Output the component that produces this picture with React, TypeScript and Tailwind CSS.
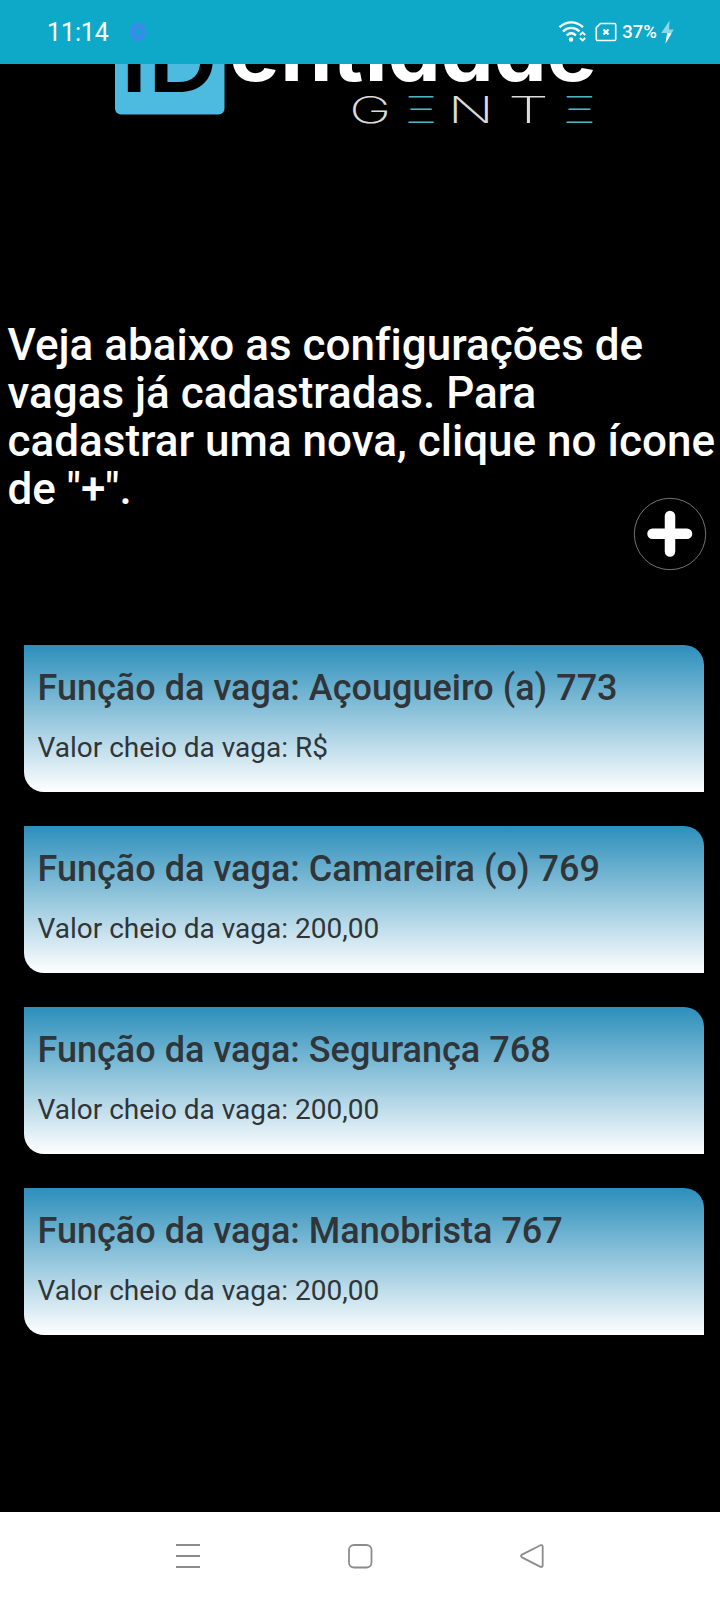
type Job = {
  id: number;
  role: string;
  amount: string;
};

const jobs: Job[] = [
  { id: 773, role: "Açougueiro (a)", amount: "R$" },
  { id: 769, role: "Camareira (o)", amount: "200,00" },
  { id: 768, role: "Segurança", amount: "200,00" },
  { id: 767, role: "Manobrista", amount: "200,00" },
];

function WifiIcon() {
  return (
    <svg width="28" height="22" viewBox="0 0 28 22" fill="none" stroke="#fff" strokeWidth="2.3">
      <path d="M1.5 6.2C8.5-.3 18-.3 25 6.2" />
      <path d="M5 10.4c5-4.6 11.5-4.6 16.5 0" />
      <path d="M8.6 14.3c3-2.5 6.5-2.5 9.3 0" />
      <circle cx="13" cy="18.5" r="2.2" fill="#fff" stroke="none" />
      <path d="M22 14l2.6-2.5 2.6 2.5M22 17l2.6 2.5 2.6-2.5" strokeWidth="1.8" />
    </svg>
  );
}

function SimIcon() {
  return (
    <svg width="22" height="20" viewBox="0 0 22 20" fill="none" stroke="#fff">
      <path
        d="M5.5 1.5h14a1.2 1.2 0 0 1 1.2 1.2v14.6a1.2 1.2 0 0 1-1.2 1.2h-17a1.2 1.2 0 0 1-1.2-1.2V5.7z"
        strokeWidth="1.6"
      />
      <path d="M8.5 7.5l5 5M13.5 7.5l-5 5" strokeWidth="2.2" />
    </svg>
  );
}

function BoltIcon() {
  return (
    <svg width="13" height="24" viewBox="0 0 13 24">
      <path d="M8.5.5L.3 13h5.9L4.5 23.5 12.8 9.5H8z" fill="#8fd6e6" />
      <path d="M4.5 23.5L10.4 13.5 6.2 13z" fill="#fff" />
    </svg>
  );
}

function StatusBar() {
  return (
    <header className="flex h-16 shrink-0 items-center justify-between bg-[#0ea9c8] pr-[46px] pl-[47px] text-white">
      <div className="flex items-center gap-[19px]">
        <span className="pt-px text-[25px] tracking-[-0.1px]">11:14</span>
        <svg width="20" height="22" viewBox="0 0 20 22">
          <path
            d="M10 .5l2.8 3.7 4.6-.6-1.8 4.2L19 11l-3.400 3.200 1.800 4.200-4.600-.6L10 21.500l-2.800-3.700-4.600.6 1.800-4.200L1 11l3.400-3.200-1.800-4.200 4.600.6z"
            fill="#3f87ef"
          />
          <circle cx="10" cy="11" r="3.3" fill="#0ea9c8" />
        </svg>
      </div>
      <div className="flex items-center">
        <WifiIcon />
        <span className="ml-[9px]">
          <SimIcon />
        </span>
        <span className="ml-[5px] pt-[2px] text-[18.5px] font-medium">37%</span>
        <span className="ml-1">
          <BoltIcon />
        </span>
      </div>
    </header>
  );
}

function Logo() {
  return (
    <svg className="block" width="720" height="76" viewBox="0 64 720 76" fontFamily="Inter, sans-serif">
      <rect x="115" y="5" width="109.5" height="109.5" rx="6" fill="#4dbbdf" />
      <text
        x="0 24.6"
        y="0"
        fontSize="88"
        fontWeight="620"
        fill="#000"
        transform="translate(120.8 91.5) scale(1.1 1)"
      >
        ID
      </text>
      <text
        x="218.6 267 316.7 347.4 369.3 419.7 470.2 520.8"
        y="81.3"
        fontSize="80"
        fontWeight="650"
        fill="#fff"
        transform="scale(1.05 1)"
        style={{ fontFeatureSettings: '"cv11"' }}
      >
        entidade
      </text>
      <g fontSize="36.5" fontWeight="200" fill="#dcdcdc">
        <text transform="translate(349.2 123) scale(1.55 1)">G</text>
        <text transform="translate(405 123) scale(1.35 1)" fill="#4fb6bf">Ξ</text>
        <text transform="translate(447.6 123) scale(1.67 1)">N</text>
        <text transform="translate(507.9 123) scale(1.79 1)">T</text>
        <text transform="translate(563 123) scale(1.38 1)" fill="#4fb6bf">Ξ</text>
      </g>
    </svg>
  );
}

function AddButton() {
  return (
    <button type="button" aria-label="Adicionar" className="block">
      <svg width="74" height="74" viewBox="0 0 74 74">
        <circle cx="37" cy="37" r="35.7" fill="none" stroke="#8f8f8f" strokeWidth="0.8" />
        <path d="M37 19v35.5M19.5 36.8H54" stroke="#fff" strokeWidth="10.5" strokeLinecap="round" />
      </svg>
    </button>
  );
}

function JobCard({ job }: { job: Job }) {
  return (
    <article className="h-[147px] rounded-tr-[20px] rounded-bl-[20px] bg-[linear-gradient(to_bottom,#2c8fbb,#fff)] px-[13.5px] pt-[21px] text-[#2f3538]">
      <h2 className="text-[36px] leading-[44px] font-medium tracking-[0.02px] whitespace-nowrap">
        Função da vaga: {job.role} {job.id}
      </h2>
      <p className="mt-5 text-[28px] leading-[36px] whitespace-nowrap">
        Valor cheio da vaga: {job.amount}
      </p>
    </article>
  );
}

function NavBar() {
  return (
    <nav className="flex h-[88px] shrink-0 items-center justify-between bg-white px-[174px]">
      <svg width="28" height="28" viewBox="0 0 28 28" stroke="#8c8c8c" strokeWidth="2">
        <path d="M2 3h24M2 14h24M2 25h24" />
      </svg>
      <svg width="28" height="28" viewBox="0 0 28 28" fill="none" stroke="#8c8c8c" strokeWidth="1.8">
        <rect x="3" y="3" width="22.5" height="22.5" rx="5" />
      </svg>
      <svg width="28" height="28" viewBox="0 0 28 28" fill="none" stroke="#8c8c8c" strokeWidth="1.8">
        <path d="M22.5 3.2L4 12.6q-2 1.4 0 2.8l18.5 9.4q2.2.7 2.2-1.8V5q0-2.5-2.2-1.8z" />
      </svg>
    </nav>
  );
}

export default function App() {
  return (
    <div className="flex h-[1600px] w-[720px] flex-col overflow-hidden bg-black font-[Roboto,sans-serif]">
      <StatusBar />
      <main className="flex-1">
        <Logo />
        <h1 className="mt-[181px] pl-[7.5px] text-[44px] leading-[48px] font-medium tracking-[0.01px] whitespace-nowrap text-white">
          Veja abaixo as configurações de
          <br />
          vagas já cadastradas. Para
          <br />
          cadastrar uma nova, clique no ícone
          <br />
          de "+".
        </h1>
        <div className="-mt-[16px] flex justify-end pr-[13px]">
          <AddButton />
        </div>
        <section className="mt-[74px] flex flex-col gap-[34px] pr-4 pl-6">
          {jobs.map((job) => (
            <JobCard key={job.id} job={job} />
          ))}
        </section>
      </main>
      <NavBar />
    </div>
  );
}
